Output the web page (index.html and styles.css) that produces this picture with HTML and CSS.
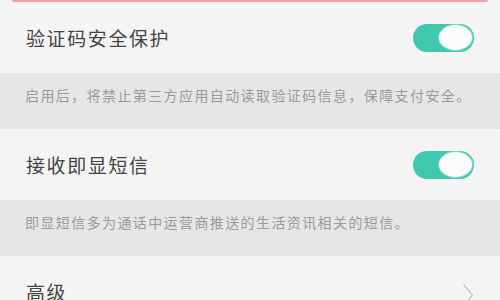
FILE: index.html
```html
<!DOCTYPE html>
<html lang="zh-CN">
<head>
    <meta charset="UTF-8">
    <title>短信设置</title>
    <link rel="stylesheet" href="styles.css">
</head>
<body>
    <div class="top-edge"></div>

    <div class="setting-row">
        <span class="setting-title">验证码安全保护</span>
        <span class="switch on"><span class="knob"></span></span>
    </div>
    <div class="setting-desc">启用后，将禁止第三方应用自动读取验证码信息，保障支付安全。</div>

    <div class="setting-row">
        <span class="setting-title">接收即显短信</span>
        <span class="switch on"><span class="knob"></span></span>
    </div>
    <div class="setting-desc">即显短信多为通话中运营商推送的生活资讯相关的短信。</div>

    <div class="setting-row">
        <span class="setting-title">高级</span>
        <svg class="chevron" width="12" height="24" viewBox="0 0 12 24">
            <path d="M1.5 1.5 L10.5 12 L1.5 22.5" fill="none" stroke="#c8c8c8" stroke-width="1.4"/>
        </svg>
    </div>
</body>
</html>
```

FILE: styles.css
```css
:root {
    --row-bg: #f4f4f4;
    --desc-bg: #e6e6e6;
    --title-color: #444;
    --desc-color: #9a9a9a;
    --accent: #3fc8ae;
}

* {
    box-sizing: border-box;
    margin: 0;
    padding: 0;
}

body {
    font-family: "Noto Sans CJK SC", "Noto Sans", sans-serif;
    background: var(--row-bg);
    width: 500px;
    height: 300px;
    overflow: hidden;
}

.top-edge {
    margin: 0 12px;
    height: 2px;
    background: #f2a2a5;
    border-radius: 0 0 3px 3px;
}

.setting-row {
    height: 71px;
    display: flex;
    align-items: center;
    justify-content: space-between;
    padding: 0 26px;
    background: var(--row-bg);
}

.setting-title {
    font-size: 19px;
    letter-spacing: 1.6px;
    color: var(--title-color);
}

.setting-desc {
    height: 56px;
    background: var(--desc-bg);
    padding: 12px 25px 0;
    font-size: 14px;
    letter-spacing: 1.4px;
    color: var(--desc-color);
    white-space: nowrap;
}

.switch {
    width: 61px;
    height: 28px;
    border-radius: 14px;
    background: var(--accent);
    display: flex;
    align-items: center;
    justify-content: flex-end;
    padding: 0 2px;
}

.knob {
    width: 33px;
    height: 25px;
    border-radius: 50%;
    background: #fbfbfb;
    box-shadow: 0 0 0 1px #7fd9c8;
}

.chevron {
    margin-top: 6px;
}
```
